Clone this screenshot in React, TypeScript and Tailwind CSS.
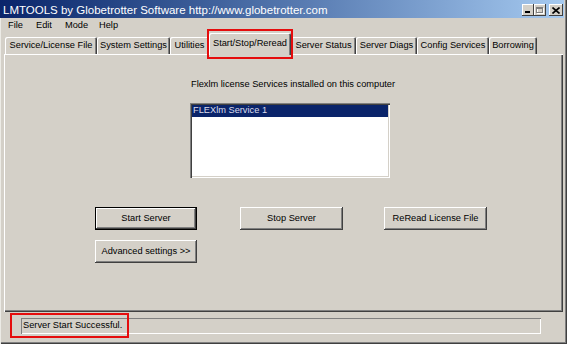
import React from "react";

const tabBase =
  "h-[17px] flex items-center justify-center whitespace-nowrap rounded-t-[2px] shadow-[inset_1px_1px_#ffffff,inset_-1px_0_#404040,inset_-2px_0_#808080]";

const btnRaised =
  "h-[23px] flex items-center justify-center whitespace-nowrap text-[9.25px] shadow-[inset_-1px_-1px_#404040,inset_1px_1px_#ffffff,inset_-2px_-2px_#808080]";

function Tab({ label, w }: { label: string; w: string }) {
  return <div className={`${tabBase} ${w}`}>{label}</div>;
}

export default function App() {
  return (
    <div className="relative w-[567px] h-[344px] bg-[#d4d0c8] flex flex-col overflow-hidden font-['Liberation_Sans',Arial,sans-serif] text-black shadow-[inset_1px_0_#ecebe6,inset_-1px_-1px_#404040,inset_-2px_-2px_#808080]">
      {/* Title bar */}
      <div className="h-[18px] mr-[3px] flex items-start bg-linear-to-r from-[#0a246a] to-[#a6caf0]">
        <div className="flex-1 pl-[3px] pt-[4px] text-[11.5px] leading-[13px] text-white whitespace-nowrap">
          LMTOOLS by Globetrotter Software http://www.globetrotter.com
        </div>
        <div className="flex items-center mt-[4px] mr-[1px]">
          <div className="w-[12px] h-[12px] bg-[#d4d0c8] shadow-[inset_-1px_-1px_#404040,inset_1px_1px_#ffffff] flex items-end justify-start pl-[3px] pb-[3px]">
            <div className="w-[5px] h-[2px] bg-black" />
          </div>
          <div className="w-[12px] h-[12px] bg-[#d4d0c8] shadow-[inset_-1px_-1px_#404040,inset_1px_1px_#ffffff] flex items-center justify-center">
            <svg width="8" height="7" viewBox="0 0 8 7">
              <rect x="1.5" y="1.5" width="6" height="5" fill="none" stroke="#ffffff" />
              <rect x="0.5" y="0.5" width="6" height="5" fill="none" stroke="#808080" />
              <line x1="0.5" y1="1.5" x2="6.5" y2="1.5" stroke="#808080" />
            </svg>
          </div>
          <div className="ml-[3px] w-[14px] h-[12px] bg-[#d4d0c8] shadow-[inset_-1px_-1px_#404040,inset_1px_1px_#ffffff] flex items-center justify-center">
            <svg width="8" height="7" viewBox="0 0 8 7">
              <path d="M0.5 0.5 L7.5 6.5 M7.5 0.5 L0.5 6.5" stroke="#000" strokeWidth="1.6" />
            </svg>
          </div>
        </div>
      </div>

      {/* Menu bar */}
      <div className="h-[15px] flex items-center pl-[2px] text-[9.25px] leading-none">
        <div className="w-[28px] pl-[6px]">File</div>
        <div className="w-[29px] pl-[6px]">Edit</div>
        <div className="w-[34px] pl-[6px]">Mode</div>
        <div className="w-[32px] pl-[6px]">Help</div>
      </div>

      {/* Body */}
      <div className="flex flex-col px-[4px] text-[9.25px]">
        {/* Tabs */}
        <div className="h-[21px] flex items-end ml-[1px]">
          <Tab label="Service/License File" w="w-[92px]" />
          <Tab label="System Settings" w="w-[73px]" />
          <Tab label="Utilities" w="w-[39px]" />
          <div className="relative z-10 -mb-[1px] w-[82px] h-[22px] bg-[#d4d0c8] flex items-center justify-center whitespace-nowrap rounded-t-[2px] shadow-[inset_1px_1px_#ffffff,inset_-1px_0_#404040,inset_-2px_0_#808080] pb-[1px]">
            Start/Stop/Reread
          </div>
          <Tab label="Server Status" w="w-[65px]" />
          <Tab label="Server Diags" w="w-[61px]" />
          <Tab label="Config Services" w="w-[72px]" />
          <Tab label="Borrowing" w="w-[48px]" />
        </div>

        {/* Panel */}
        <div className="h-[258px] flex flex-col shadow-[inset_1px_1px_#ffffff,inset_-1px_-1px_#404040,inset_-2px_-2px_#808080]">
          <div className="mt-[25px] ml-[187px] h-[12px] flex items-center whitespace-nowrap">
            Flexlm license Services installed on this computer
          </div>
          <div className="mt-[12px] ml-[186px] w-[200px] h-[75px] bg-white p-[2px] shadow-[inset_1px_1px_#808080,inset_2px_2px_#404040,inset_-1px_-1px_#ffffff,inset_-2px_-2px_#d4d0c8]">
            <div className="h-[12px] bg-[#0a246a] text-[#dcdcec] pl-[1px] flex items-center whitespace-nowrap">
              FLEXlm Service 1
            </div>
          </div>
          <div className="mt-[29px] ml-[91px] flex">
            <div className={`${btnRaised} w-[102px] border border-black`}>Start Server</div>
            <div className={`${btnRaised} w-[103px] ml-[43px]`}>Stop Server</div>
            <div className={`${btnRaised} w-[103px] ml-[41px]`}>ReRead License File</div>
          </div>
          <div className="mt-[10px] ml-[91px] flex">
            <div className={`${btnRaised} w-[102px]`}>Advanced settings &gt;&gt;</div>
          </div>
        </div>

        {/* Status bar */}
        <div className="mt-[6px] ml-[17px] w-[520px] h-[16px] flex items-center pl-[2px] whitespace-nowrap shadow-[inset_1px_1px_#808080,inset_-1px_-1px_#ffffff]">
          Server Start Successful.
        </div>
      </div>

      {/* Red highlight boxes */}
      <div className="absolute left-[207px] top-[29px] w-[86px] h-[30px] border-2 border-[#e50d0d] z-20" />
      <div className="absolute left-[10px] top-[313px] w-[119px] h-[25px] border-2 border-[#e50d0d] z-20" />
    </div>
  );
}
